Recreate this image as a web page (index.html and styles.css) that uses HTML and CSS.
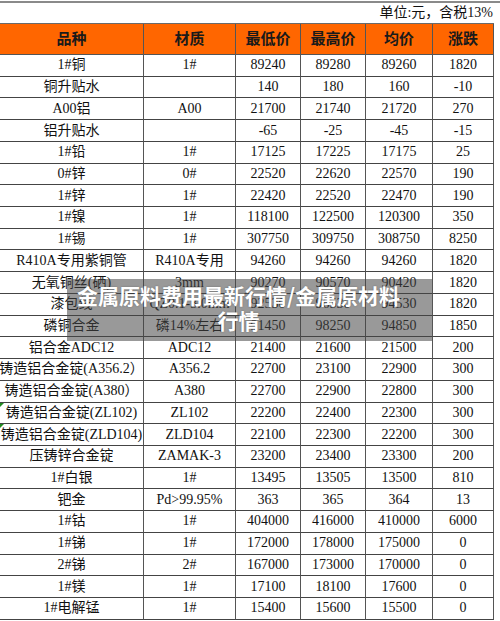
FILE: index.html
```html
<!DOCTYPE html>
<html lang="zh">
<head>
<meta charset="utf-8">
<title>金属原料费用最新行情</title>
<link rel="stylesheet" href="styles.css">
</head>
<body>
<div class="page">
  <div class="unit">单位:元，含税13%</div>
  <div class="grid">
    <div class="h">品种</div><div class="h">材质</div><div class="h">最低价</div><div class="h">最高价</div><div class="h">均价</div><div class="h">涨跌</div>

    <div>1#铜</div><div>1#</div><div>89240</div><div>89280</div><div>89260</div><div>1820</div>
    <div>铜升贴水</div><div></div><div>140</div><div>180</div><div>160</div><div>-10</div>
    <div>A00铝</div><div>A00</div><div>21700</div><div>21740</div><div>21720</div><div>270</div>
    <div>铝升贴水</div><div></div><div>-65</div><div>-25</div><div>-45</div><div>-15</div>
    <div>1#铅</div><div>1#</div><div>17125</div><div>17225</div><div>17175</div><div>25</div>
    <div>0#锌</div><div>0#</div><div>22520</div><div>22620</div><div>22570</div><div>190</div>
    <div>1#锌</div><div>1#</div><div>22420</div><div>22520</div><div>22470</div><div>190</div>
    <div>1#镍</div><div>1#</div><div>118100</div><div>122500</div><div>120300</div><div>350</div>
    <div>1#锡</div><div>1#</div><div>307750</div><div>309750</div><div>308750</div><div>8250</div>
    <div>R410A专用紫铜管</div><div>R410A专用</div><div>94260</div><div>94260</div><div>94260</div><div>1820</div>
    <div>无氧铜丝(硒)</div><div>3mm</div><div>90270</div><div>90570</div><div>90420</div><div>1820</div>
    <div>漆包线</div><div>QZ0.1-3.0mm</div><div>92530</div><div>96530</div><div>94530</div><div>1820</div>
    <div>磷铜合金</div><div>磷14%左右</div><div>91450</div><div>98250</div><div>94850</div><div>1850</div>
    <div>铝合金ADC12</div><div>ADC12</div><div>21400</div><div>21600</div><div>21500</div><div>200</div>
    <div>铸造铝合金锭(A356.2）</div><div>A356.2</div><div>22700</div><div>23100</div><div>22900</div><div>300</div>
    <div>铸造铝合金锭(A380）</div><div>A380</div><div>22700</div><div>22900</div><div>22800</div><div>300</div>
    <div class="flag">铸造铝合金锭(ZL102)</div><div>ZL102</div><div>22200</div><div>22400</div><div>22300</div><div>300</div>
    <div class="flag">铸造铝合金锭(ZLD104)</div><div>ZLD104</div><div>22100</div><div>22300</div><div>22200</div><div>300</div>
    <div>压铸锌合金锭</div><div>ZAMAK-3</div><div>23200</div><div>23400</div><div>23300</div><div>200</div>
    <div>1#白银</div><div>1#</div><div>13495</div><div>13505</div><div>13500</div><div>810</div>
    <div>钯金</div><div>Pd&gt;99.95%</div><div>363</div><div>365</div><div>364</div><div>13</div>
    <div>1#钴</div><div>1#</div><div>404000</div><div>416000</div><div>410000</div><div>6000</div>
    <div>1#锑</div><div>1#</div><div>172000</div><div>178000</div><div>175000</div><div>0</div>
    <div>2#锑</div><div>2#</div><div>167000</div><div>173000</div><div>170000</div><div>0</div>
    <div>1#镁</div><div>1#</div><div>17100</div><div>18100</div><div>17600</div><div>0</div>
    <div>1#电解锰</div><div>1#</div><div>15400</div><div>15600</div><div>15500</div><div>0</div>
  </div>
  <div class="caption">金属原料费用最新行情/金属原材料行情</div>
</div>
</body>
</html>
```

FILE: styles.css
```css
html, body {
  margin: 0;
  padding: 0;
  background: #fff;
}

.page {
  position: relative;
  width: 500px;
  padding-top: 1px;
  font-family: "Liberation Serif", "Noto Sans CJK SC", serif;
  font-size: 14px;
  color: #111;
}

.unit {
  box-sizing: border-box;
  height: 22px;
  border-top: 2px solid #8a8a8a;
  padding-right: 7px;
  text-align: right;
  line-height: 20px;
}

.grid {
  display: grid;
  width: 494px;
  grid-template-columns: 144px 92px 65px 65px 67px 61px;
  grid-template-rows: 31px;
  grid-auto-rows: 21.73px;
  border-top: 1px solid #6a6a6a;
}

.grid > div {
  box-sizing: border-box;
  position: relative;
  display: flex;
  align-items: center;
  justify-content: center;
  white-space: nowrap;
  border-right: 1px solid #555;
  border-bottom: 1px solid #444;
  line-height: 1;
}

.grid > div.h {
  background: #ff6600;
  font-weight: bold;
  font-size: 15px;
  color: #1a1a1a;
  border-bottom-color: #555;
}

.grid > div.flag::before {
  content: "";
  position: absolute;
  left: 0;
  top: 0;
  width: 0;
  height: 0;
  border-top: 4px solid #1f8a1f;
  border-right: 4px solid transparent;
}

.caption {
  position: absolute;
  left: 67px;
  top: 279px;
  width: 365px;
  height: 62px;
  box-sizing: border-box;
  padding: 4px 28px 0 6px;
  background: rgba(70, 70, 70, 0.55);
  color: #fff;
  font-family: "Noto Sans CJK SC", sans-serif;
  font-weight: bold;
  font-size: 21px;
  line-height: 25px;
  text-align: center;
  text-shadow: 0 0 2px rgba(0, 0, 0, 0.3);
}
```
